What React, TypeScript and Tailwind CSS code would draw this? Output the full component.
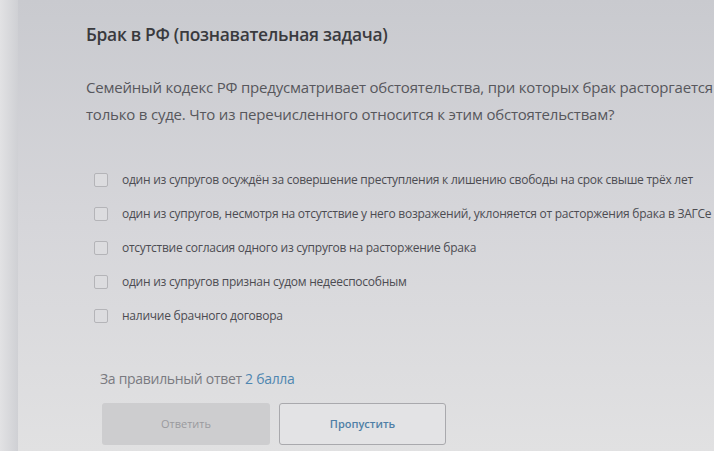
import React from 'react';

const OPTIONS = [
  'один из супругов осуждён за совершение преступления к лишению свободы на срок свыше трёх лет',
  'один из супругов, несмотря на отсутствие у него возражений, уклоняется от расторжения брака в ЗАГСе',
  'отсутствие согласия одного из супругов на расторжение брака',
  'один из супругов признан судом недееспособным',
  'наличие брачного договора',
];

const font = { fontFamily: '"Open Sans", "Noto Sans", sans-serif' };

export default function App() {
  return (
    <div
      className="w-[714px] h-[451px] overflow-hidden flex bg-gradient-to-b from-[#c9cacf] via-[#d6d6da] to-[#e1e1e2]"
      style={font}
    >
      <div className="w-[18px] shrink-0 bg-gradient-to-r from-[#e2e2e4] to-[#cfd0d4]" />
      <div className="flex-1 min-w-0 pl-[68px] pt-[22px] whitespace-nowrap">
        <h1 className="text-[17.4px] leading-[24px] font-semibold text-[#3a3a3e] tracking-[-0.3px]">
          Брак в РФ (познавательная задача)
        </h1>
        <p className="mt-[28px] text-[15px] leading-[27px] text-[#57575c] tracking-[-0.2px]">
          Семейный кодекс РФ предусматривает обстоятельства, при которых брак расторгается
          <br />
          только в суде. Что из перечисленного относится к этим обстоятельствам?
        </p>
        <div className="mt-[44px] flex flex-col gap-[19px] pl-[8px]">
          {OPTIONS.map((o) => (
            <label key={o} className="flex items-center gap-[14px] h-[15px]">
              <span className="w-[14px] h-[14px] shrink-0 rounded-[2px] border border-[#b4b4b8] bg-[#dcdcdf]" />
              <span className="text-[12px] text-[#4c4c52] tracking-[-0.25px]">{o}</span>
            </label>
          ))}
        </div>
        <div className="mt-[45px] pl-[14px] text-[14px] text-[#7a7a80] tracking-[-0.3px]">
          За правильный ответ <span className="text-[#4f86b0]">2 балла</span>
        </div>
        <div className="mt-[14px] pl-[16px] flex gap-[9px]">
          <button className="w-[168px] h-[42px] rounded-[3px] bg-[#cdcdcf] text-[11px] text-[#9a9a9e]">
            Ответить
          </button>
          <button className="w-[167px] h-[42px] rounded-[3px] border border-[#a9a9ad] bg-[#e3e3e5] text-[11px] font-semibold text-[#4f7fa6]">
            Пропустить
          </button>
        </div>
      </div>
    </div>
  );
}
